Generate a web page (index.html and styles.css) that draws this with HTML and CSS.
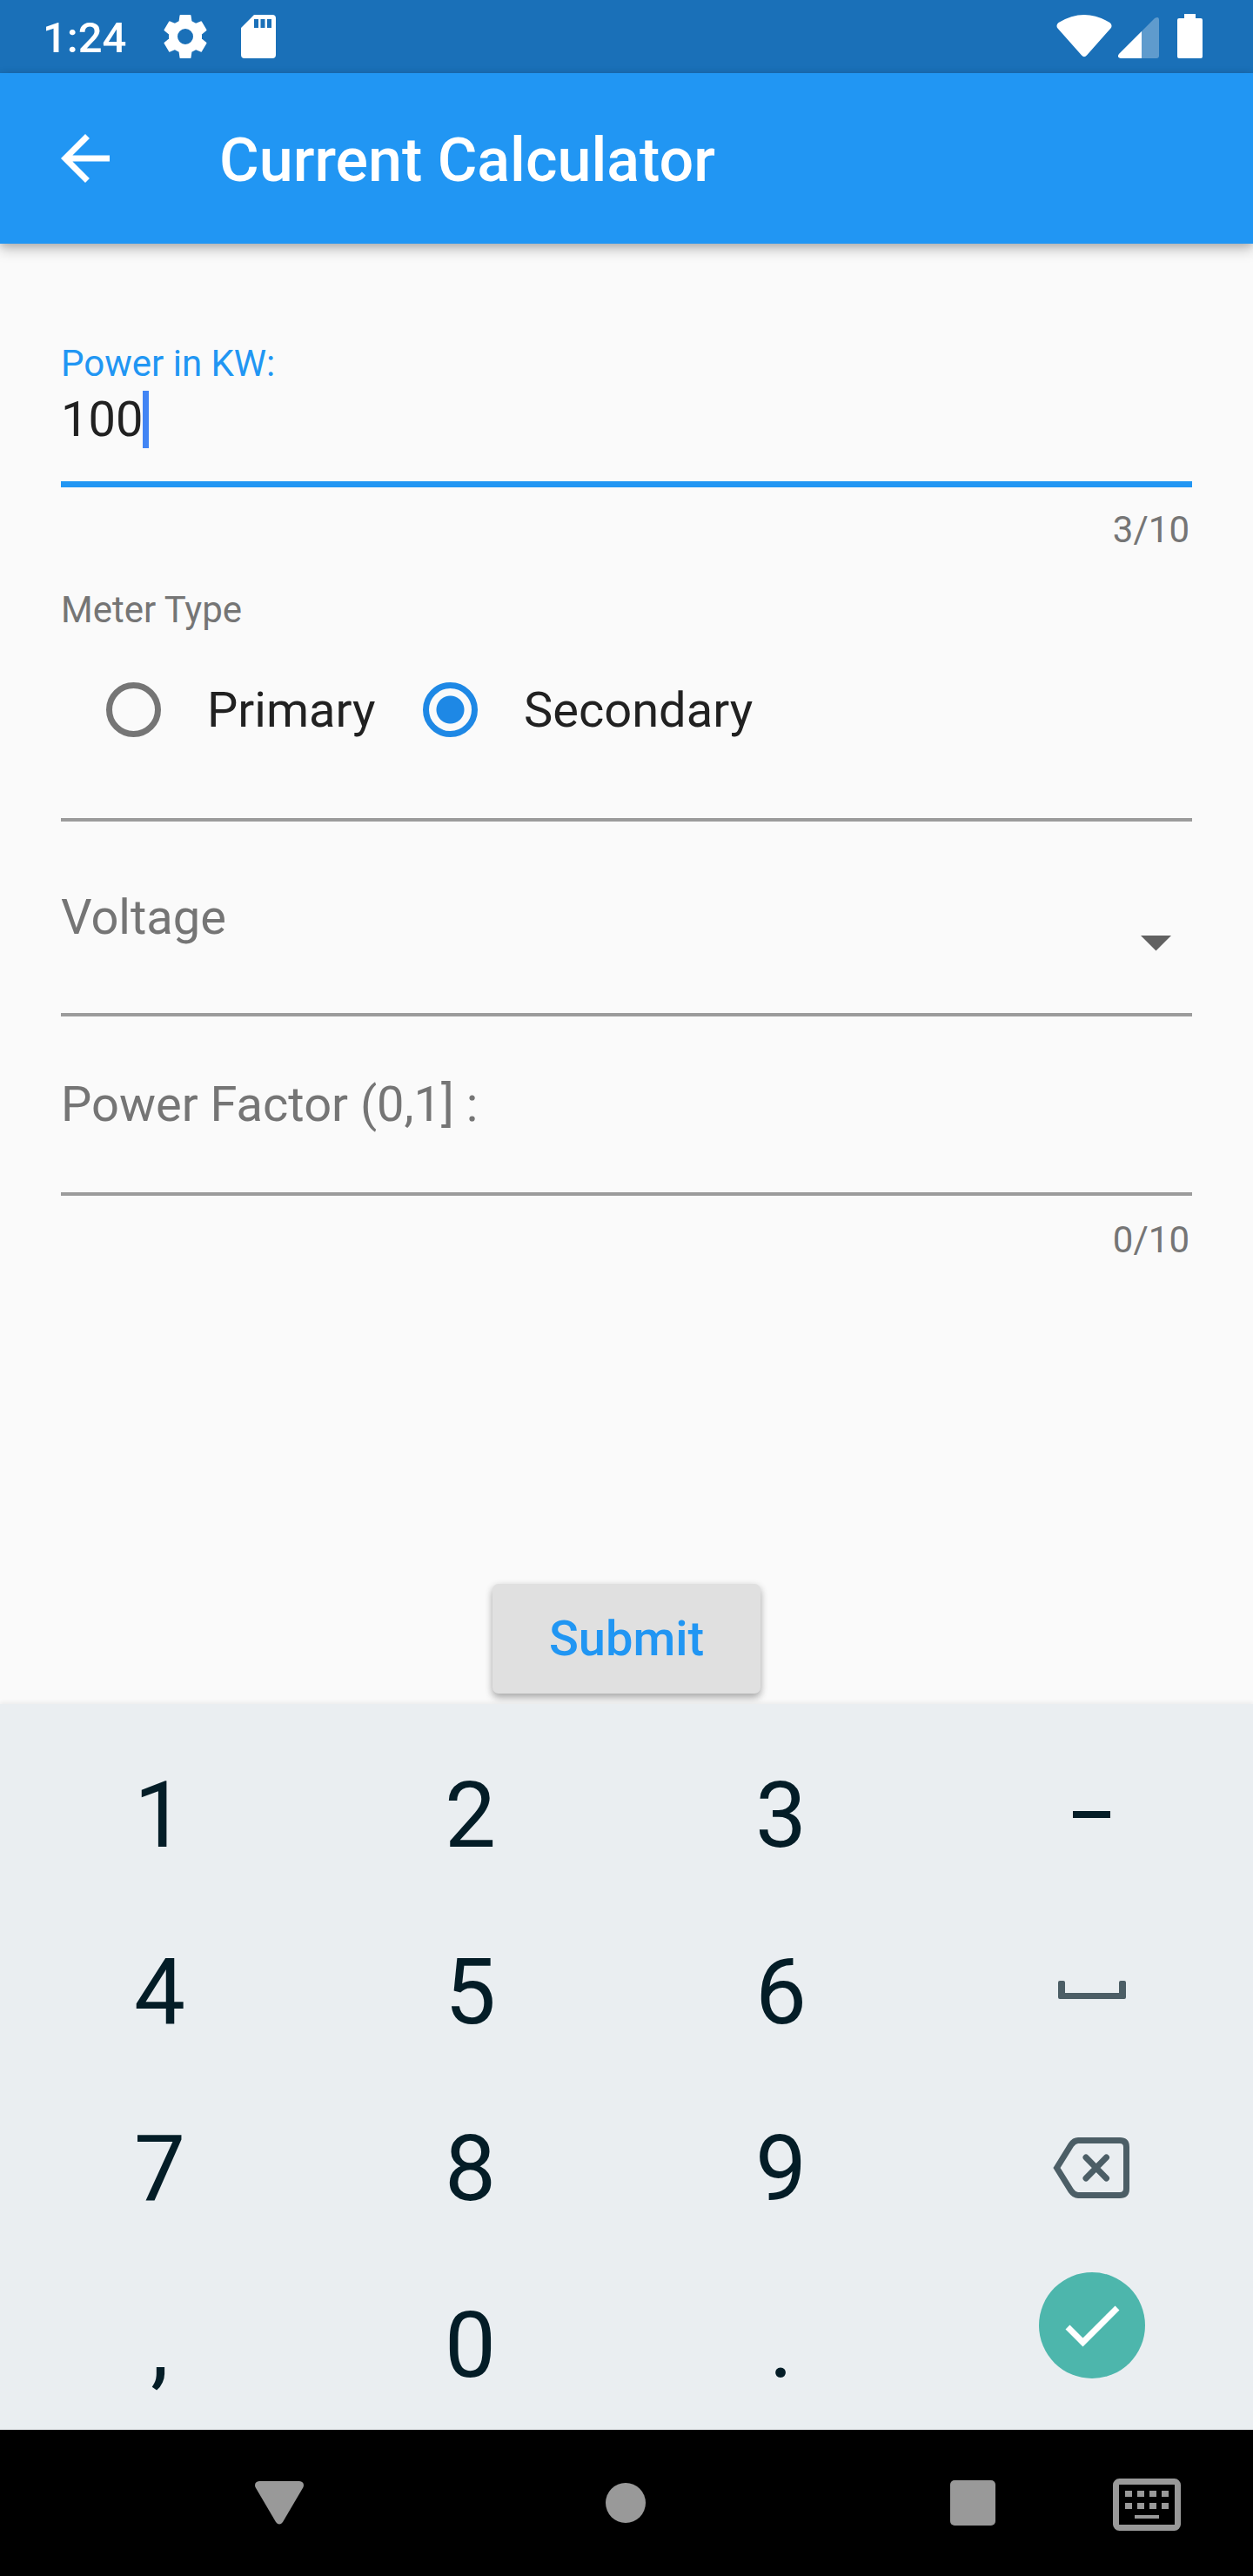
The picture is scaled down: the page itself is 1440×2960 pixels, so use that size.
FILE: index.html
```html
<!DOCTYPE html>
<html lang="en">
<head>
<meta charset="utf-8">
<title>Current Calculator</title>
<link rel="stylesheet" href="styles.css">
</head>
<body>
<header class="status">
  <div class="status-left">
    <span class="clock">1:24</span>
    <svg class="gear" viewBox="-30 -30 60 60" width="60" height="60"><path fill="#fff" stroke="#fff" stroke-width="2" stroke-linejoin="round" fill-rule="evenodd" d="M-5.500 -24H5.500L6.500 -17L12 -14L18 -16.700L23.500 -7.500L18 -3V3L23.500 7.500L18 16.700L12 14L6.500 17L5.500 24H-5.500L-6.500 17L-12 14L-18 16.700L-23.500 7.500L-18 3V-3L-23.500 -7.500L-18 -16.700L-12 -14L-6.500 -17ZM0 -10A10 10 0 0 0 0 10A10 10 0 0 0 0 -10Z"/></svg>
    <svg viewBox="0 0 24 24" width="60" height="60"><path fill="#fff" fill-rule="evenodd" d="M10 2H18.400Q20 2 20 3.600V20.400Q20 22 18.400 22H5.600Q4 22 4 20.400V8ZM10 4V8H12V4ZM13 4V8H15V4ZM16 4V8H18V4Z"/></svg>
  </div>
  <svg class="status-right" viewBox="0 0 180 84" width="180" height="84">
    <path fill="#fff" d="M6.500 26Q36 8 65.500 26Q69 29 66.500 32.500L39 63.500Q36 67 33 63.500L5.500 32.500Q3 29 6.500 26Z"/>
    <path fill="#fff" fill-opacity=".3" d="M76 62L117 21Q122 18 122 23V64Q122 67 119 67H78Q73 66 76 62Z"/>
    <path fill="#fff" d="M76 62L102 36V67H78Q73 66 76 62Z"/>
    <path fill="#fff" d="M151 16H164V21H170Q172 21 172 23V65Q172 67 170 67H145Q143 67 143 65V23Q143 21 145 21H151Z"/>
  </svg>
</header>
<div class="appbar">
  <svg viewBox="0 0 24 24" width="84" height="84"><path fill="#fff" d="M20 11H7.830l5.590-5.590L12 4l-8 8 8 8 1.410-1.410L7.830 13H20v-2z"/></svg>
  <h1 class="title">Current Calculator</h1>
</div>
<main class="form">
  <section class="field power">
    <label class="label active">Power in KW:</label>
    <div class="value">100<span class="caret"></span></div>
  </section>
  <div class="counter">3/10</div>
  <section class="field meter">
    <div class="label">Meter Type</div>
    <div class="radios">
      <span class="radio"></span><span class="option primary">Primary</span>
      <span class="radio on"></span><span class="option">Secondary</span>
    </div>
  </section>
  <section class="field voltage">
    <span class="hint">Voltage</span>
    <svg class="arrow" viewBox="0 0 35 18" width="35" height="18"><path fill="#616161" d="M0 0H35L17.500 17.500Z"/></svg>
  </section>
  <section class="field factor"><span class="hint">Power Factor (0,1] :</span></section>
  <div class="counter last">0/10</div>
  <button class="submit">Submit</button>
</main>
<section class="keyboard">
  <div class="key">1</div><div class="key">2</div><div class="key">3</div><div class="key"><span class="minus"></span></div>
  <div class="key">4</div><div class="key">5</div><div class="key">6</div>
  <div class="key"><svg class="space" viewBox="0 0 78 22" width="78" height="22"><path fill="#4c5e66" d="M2 0H6Q8 0 8 2V14H70V2Q70 0 72 0H76Q78 0 78 2V19Q78 21 76 21H2Q0 21 0 19V2Q0 0 2 0Z"/></svg></div>
  <div class="key">7</div><div class="key">8</div><div class="key">9</div>
  <div class="key"><svg class="del" viewBox="0 0 90 70" width="90" height="70"><g fill="none" stroke="#4c5e66" stroke-width="7"><path d="M4.500 35L21 8.500Q24.500 3.500 29 3.500H77Q84.500 3.500 84.500 11V59Q84.500 66.500 77 66.500H29Q24.500 66.500 21 61.500Z"/><path stroke-linecap="round" d="M38 23L61.500 47M61.500 23L38 47"/></g></svg></div>
  <div class="key">,</div><div class="key">0</div><div class="key">.</div>
  <div class="key"><svg class="done" viewBox="0 0 122 122" width="122" height="122"><circle cx="61" cy="61" r="61" fill="#4db6ac"/><path d="M33 63L50.500 80.500L90 41" fill="none" stroke="#fff" stroke-width="7"/></svg></div>
</section>
<nav class="nav">
  <svg viewBox="0 0 56 50" width="56" height="50"><path fill="#999" d="M5 0H51Q57.500 1 55.500 7L32 47Q28 52 24 47L.5 7Q-1.500 1 5 0Z"/></svg>
  <span class="home"></span>
  <span class="recent"></span>
  <svg class="kb" viewBox="0 0 78 60" width="78" height="60"><rect x="3.500" y="3.500" width="71" height="53" rx="4" fill="none" stroke="#999" stroke-width="7"/><path fill="#999" d="M14 14h8v7h-8zM28 14h8v7h-8zM42 14h8v7h-8zM56 14h8v7h-8zM14 28h8v7h-8zM28 28h8v7h-8zM42 28h8v7h-8zM56 28h8v7h-8zM25 42h28v4h-28z"/></svg>
</nav>
</body>
</html>
```
FILE: styles.css
```css
* { box-sizing: border-box; }
body {
  margin: 0;
  width: 1440px;
  height: 2960px;
  overflow: hidden;
  display: flex;
  flex-direction: column;
  background: #fafafa;
  font-family: Roboto, sans-serif;
  color: #212121;
}
svg { display: block; flex: none; }
.status {
  height: 84px;
  flex: none;
  background: #1a70b8;
  display: flex;
  justify-content: space-between;
}
.status-left { display: flex; align-items: center; padding-left: 49px; }
.clock { color: #fff; font-size: 49px; font-weight: 500; line-height: 84px; width: 134px; padding-top: 3px; }
.gear { margin-right: 24px; }
.status-right { margin-right: 50px; }
.appbar {
  height: 196px;
  flex: none;
  background: #2196f3;
  display: flex;
  align-items: center;
  padding-left: 56px;
  box-shadow: 0 7px 14px rgba(0, 0, 0, .22), 0 2px 8px rgba(0, 0, 0, .14);
}
.title { margin: 0 0 0 112px; color: #fff; font-size: 70px; line-height: 82px; font-weight: 500; padding-top: 3px; }
.form {
  height: 1678px;
  flex: none;
  padding: 112px 70px 0;
  display: flex;
  flex-direction: column;
}
.field { flex: none; border-bottom: 4px solid #9b9b9b; }
.label { display: block; font-size: 42px; line-height: 50px; color: #757575; }
.label.active { color: #2196f3; }
.power { height: 168px; padding-top: 1px; border-bottom: 7px solid #2196f3; }
.value { display: flex; font-size: 56px; line-height: 66px; margin-top: 6px; }
.caret { width: 7px; height: 66px; background: #4285f4; }
.counter { height: 116px; padding: 24px 3px 0 0; text-align: right; font-size: 42px; line-height: 50px; color: #757575; flex: none; }
.counter.last { padding-top: 26px; }
.meter { height: 268px; }
.radios { display: flex; align-items: center; height: 63px; margin-top: 58px; padding-left: 52px; }
.radio { width: 63px; height: 63px; border: 7px solid #757575; border-radius: 50%; flex: none; }
.radio.on { border-color: #1e88e5; background: radial-gradient(circle, #1e88e5 15.500px, transparent 16.500px); }
.option { font-size: 56px; line-height: 66px; margin-left: 53px; }
.primary { width: 248px; }
.voltage { height: 224px; padding-top: 77px; display: flex; justify-content: space-between; }
.arrow { margin: 54px 24px 0 0; }
.hint { display: block; font-size: 56px; line-height: 66px; color: #757575; }
.factor { height: 206px; padding-top: 68px; }
.submit {
  width: 308px;
  height: 126px;
  flex: none;
  align-self: center;
  margin-top: 330px;
  border: 0;
  border-radius: 7px;
  padding: 0;
  background: #e0e0e0;
  color: #2196f3;
  font: 500 56px/66px Roboto, sans-serif;
  box-shadow: 0 5px 8px rgba(0, 0, 0, .25), 0 2px 10px rgba(0, 0, 0, .12);
}
.keyboard {
  position: relative;
  height: 834px;
  flex: none;
  background: #eaeef1;
  box-shadow: 0 -2px 5px rgba(0, 0, 0, .06);
  padding: 27px 7px 0 5px;
  display: grid;
  grid-template-columns: repeat(4, 1fr);
  grid-template-rows: repeat(4, 203px);
}
.key { display: flex; justify-content: center; align-items: center; font-size: 105px; line-height: 123px; color: #041d27; }
.minus { width: 43px; height: 8px; margin-bottom: 4px; background: #041d27; }
.space { margin-bottom: 6px; }
.del { margin-bottom: 3px; }
.done { margin-top: -47px; }
.nav {
  height: 168px;
  flex: none;
  background: #000;
  display: flex;
  align-items: center;
  padding-left: 293px;
}
.home { width: 46px; height: 46px; border-radius: 50%; background: #999; margin-left: 347px; }
.recent { width: 52px; height: 52px; border-radius: 5px; background: #999; margin-left: 350px; }
.kb { margin: 4px 0 0 135px; }
```
